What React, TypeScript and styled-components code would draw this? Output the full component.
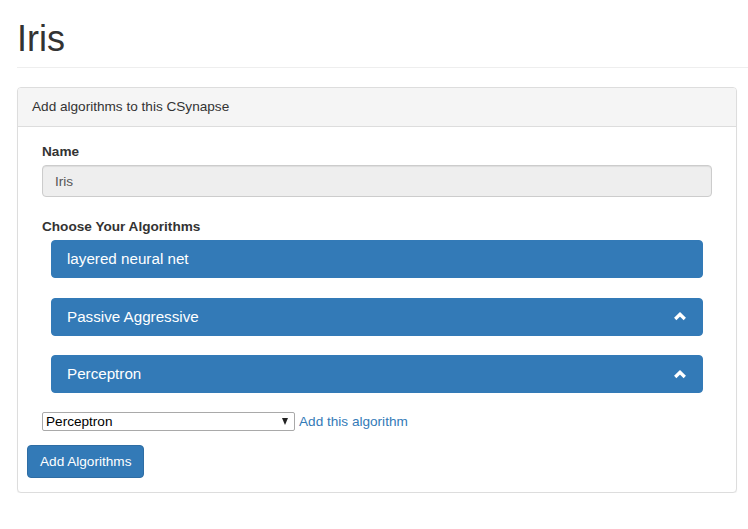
import React from "react";
import styled, { createGlobalStyle } from "styled-components";

const Global = createGlobalStyle`
  html, body { margin: 0; padding: 0; background: #fff; }
  body {
    font-family: "Liberation Sans", Arial, Helvetica, sans-serif;
    font-size: 13.6px;
    color: #333;
    overflow: hidden;
  }
  * { box-sizing: border-box; }
`;

const Page = styled.div`
  padding-left: 17px;
  width: 748px;
`;

const PageHeader = styled.div`
  padding-bottom: 9px;
  border-bottom: 1px solid #eee;
  margin-bottom: 19px;
`;

const Title = styled.h1`
  margin: 18.5px 0 0 0;
  font-size: 36px;
  font-weight: 500;
  line-height: 1.1;
  color: #333;
`;

const Panel = styled.div`
  width: 720px;
  border: 1px solid #ddd;
  border-radius: 4px;
  box-shadow: 0 1px 1px rgba(0, 0, 0, 0.05);
  background: #fff;
`;

const PanelHeading = styled.div`
  background: #f5f5f5;
  border-bottom: 1px solid #ddd;
  border-radius: 3px 3px 0 0;
  padding: 10px 14px;
  line-height: 18px;
  color: #333;
`;

const PanelBody = styled.div`
  padding: 15px 9px 14px;
`;

const FormGroup = styled.div<{ $gap?: number }>`
  padding: 0 15px;
  margin-bottom: ${(p) => p.$gap ?? 0}px;
`;

const Label = styled.label`
  display: block;
  font-weight: bold;
  line-height: 20px;
  margin-bottom: 3px;
`;

const Input = styled.input`
  display: block;
  width: 100%;
  height: 32px;
  padding: 6px 12px;
  font-family: inherit;
  font-size: 13.6px;
  color: #555;
  background: #eee;
  border: 1px solid #ccc;
  border-radius: 4px;
  box-shadow: inset 0 1px 1px rgba(0, 0, 0, 0.075);
  outline: none;
`;

const AlgoList = styled.div`
  display: flex;
  flex-direction: column;
  gap: 19.5px;
  padding: 0 24px;
`;

const AlgoBar = styled.div`
  height: 38px;
  display: flex;
  align-items: center;
  justify-content: space-between;
  padding: 0 15px 0 15px;
  background: #337ab7;
  border: 1px solid #337ab7;
  border-radius: 4px;
  color: #fff;
  font-size: 15.2px;
  line-height: 20px;
`;

const ChevronIcon = styled.svg`
  width: 14px;
  height: 9px;
  display: block;
`;

const AddRow = styled.div`
  display: flex;
  align-items: center;
  gap: 4px;
  margin-top: 19px;
`;

const SelectBox = styled.div`
  position: relative;
  width: 253px;
  height: 19px;
  border: 1px solid #a9a9a9;
  border-radius: 2px;
  background: #fff;
`;

const Select = styled.select`
  appearance: none;
  -webkit-appearance: none;
  width: 100%;
  height: 100%;
  border: none;
  background: transparent;
  font-family: inherit;
  font-size: 13.6px;
  color: #000;
  padding: 0 0 0 3px;
  line-height: 17px;
  outline: none;
`;

const SelectArrow = styled.span`
  position: absolute;
  right: 6px;
  top: 5px;
  width: 0;
  height: 0;
  border-left: 3.5px solid transparent;
  border-right: 3.5px solid transparent;
  border-top: 7px solid #222;
  pointer-events: none;
`;

const Link = styled.a`
  color: #337ab7;
  text-decoration: none;
  cursor: pointer;
`;

const PrimaryButton = styled.button`
  margin-top: 14px;
  display: inline-block;
  padding: 6px 12px;
  height: 33px;
  font-family: inherit;
  font-size: 13.6px;
  line-height: 19px;
  color: #fff;
  background: #337ab7;
  border: 1px solid #2e6da4;
  border-radius: 4px;
  cursor: pointer;
`;

const Chevron = () => (
  <ChevronIcon viewBox="0 0 14 9">
    <polyline
      points="2.2,7 7,2.4 11.8,7"
      fill="none"
      stroke="#fff"
      strokeWidth="3.3"
      strokeLinejoin="miter"
      strokeLinecap="butt"
    />
  </ChevronIcon>
);

const algorithms = [
  { name: "layered neural net", chevron: false },
  { name: "Passive Aggressive", chevron: true },
  { name: "Perceptron", chevron: true },
];

export default function App() {
  return (
    <>
      <Global />
      <Page>
        <PageHeader>
          <Title>Iris</Title>
        </PageHeader>
        <Panel>
          <PanelHeading>Add algorithms to this CSynapse</PanelHeading>
          <PanelBody>
            <FormGroup $gap={20}>
              <Label>Name</Label>
              <Input value="Iris" readOnly />
            </FormGroup>
            <FormGroup>
              <Label>Choose Your Algorithms</Label>
            </FormGroup>
            <AlgoList>
              {algorithms.map((a) => (
                <AlgoBar key={a.name}>
                  <span>{a.name}</span>
                  {a.chevron && <Chevron />}
                </AlgoBar>
              ))}
            </AlgoList>
            <FormGroup>
              <AddRow>
                <SelectBox>
                  <Select defaultValue="Perceptron">
                    <option>layered neural net</option>
                    <option>Passive Aggressive</option>
                    <option>Perceptron</option>
                  </Select>
                  <SelectArrow />
                </SelectBox>
                <Link>Add this algorithm</Link>
              </AddRow>
            </FormGroup>
            <PrimaryButton>Add Algorithms</PrimaryButton>
          </PanelBody>
        </Panel>
      </Page>
    </>
  );
}
